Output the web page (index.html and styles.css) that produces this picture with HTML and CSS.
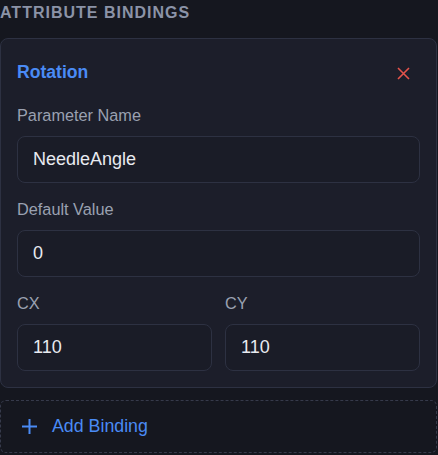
FILE: index.html
```html
<!DOCTYPE html>
<html lang="en">
<head>
  <meta charset="UTF-8">
  <meta name="viewport" content="width=device-width, initial-scale=1.0">
  <title>Attribute Bindings</title>
  <link rel="stylesheet" href="styles.css">
</head>
<body>
  <div class="panel">
    <h3 class="section-title">Attribute Bindings</h3>

    <div class="binding-card">
      <div class="binding-header">
        <span class="binding-name">Rotation</span>
        <button class="remove-btn" title="Remove">
          <svg width="13" height="13" viewBox="0 0 13 13">
            <path d="M1 1 L12 12 M12 1 L1 12" stroke="currentColor" stroke-width="1.6" fill="none"/>
          </svg>
        </button>
      </div>

      <div class="field">
        <label>Parameter Name</label>
        <input type="text" value="NeedleAngle">
      </div>

      <div class="field">
        <label>Default Value</label>
        <input type="text" value="0">
      </div>

      <div class="field-row">
        <div class="field">
          <label>CX</label>
          <input type="text" value="110">
        </div>
        <div class="field">
          <label>CY</label>
          <input type="text" value="110">
        </div>
      </div>
    </div>

    <button class="add-binding">
      <svg width="15" height="15" viewBox="0 0 15 15">
        <path d="M7.5 0 V15 M0 7.5 H15" stroke="currentColor" stroke-width="2" fill="none"/>
      </svg>
      <span>Add Binding</span>
    </button>
  </div>
</body>
</html>
```

FILE: styles.css
```css
:root {
  --page-bg: #15171f;
  --card-bg: #1c1e2a;
  --input-bg: #1a1c27;
  --border-color: #2d3142;
  --label-color: #9aa1b1;
  --title-color: #8b93a7;
  --text-color: #e8eaf0;
  --blue: #4a8bf5;
  --red: #e5534b;
}

* {
  box-sizing: border-box;
  margin: 0;
  padding: 0;
}

body {
  font-family: 'Liberation Sans', Arial, sans-serif;
  background-color: var(--page-bg);
  color: var(--text-color);
}

.panel {
  width: 437px;
}

.section-title {
  font-size: 16px;
  line-height: 18px;
  font-weight: bold;
  text-transform: uppercase;
  letter-spacing: 1px;
  color: var(--title-color);
  margin: 4px 0 16px;
}

.binding-card {
  background-color: var(--card-bg);
  border: 1px solid var(--border-color);
  border-radius: 8px;
  padding: 16px;
}

.binding-header {
  display: flex;
  justify-content: space-between;
  align-items: center;
  height: 34px;
  margin-bottom: 17px;
}

.binding-name {
  font-size: 17.6px;
  font-weight: bold;
  color: var(--blue);
}

.remove-btn {
  background: none;
  border: none;
  color: var(--red);
  display: flex;
  margin: 3px 10px 0 0;
  cursor: pointer;
}

.field {
  display: flex;
  flex-direction: column;
  min-width: 0;
  margin-bottom: 17px;
}

.field label {
  font-size: 16.3px;
  line-height: 19px;
  color: var(--label-color);
  margin-bottom: 11px;
}

.field input {
  width: 100%;
  min-width: 0;
  height: 47px;
  padding: 0 15px;
  font-family: inherit;
  font-size: 18px;
  color: var(--text-color);
  background-color: var(--input-bg);
  border: 1px solid var(--border-color);
  border-radius: 8px;
  outline: none;
}

.field-row {
  display: grid;
  grid-template-columns: 1fr 1fr;
  gap: 13px;
}

.field-row .field,
.field:last-child {
  margin-bottom: 0;
}

.add-binding {
  display: flex;
  align-items: center;
  gap: 15px;
  width: 100%;
  height: 53px;
  margin-top: 12px;
  padding-left: 21px;
  background-color: transparent;
  border: 1px dashed #363a4b;
  border-radius: 6px;
  color: var(--blue);
  font-family: inherit;
  font-size: 17.8px;
  cursor: pointer;
}
```
